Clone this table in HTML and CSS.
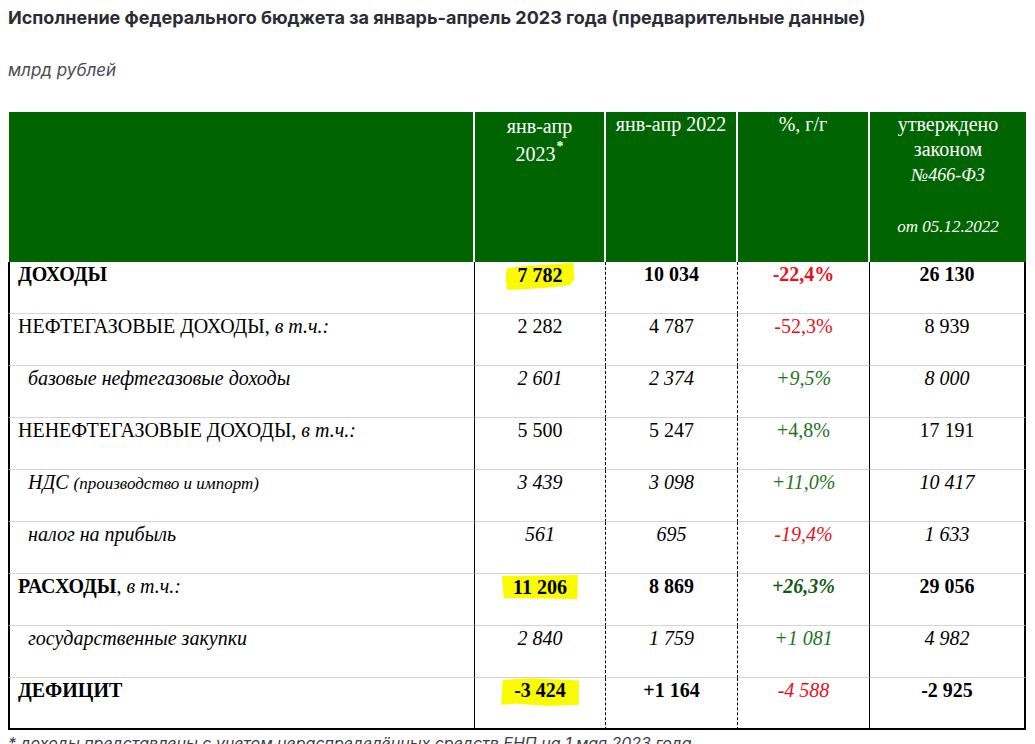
FILE: index.html
```html
<!DOCTYPE html>
<html lang="ru">
<head>
<meta charset="utf-8">
<title>Исполнение федерального бюджета</title>
<link rel="stylesheet" href="styles.css">
</head>
<body>
<h1 class="title">Исполнение федерального бюджета за январь-апрель 2023 года (предварительные данные)</h1>
<p class="units">млрд рублей</p>
<table class="budget">
  <colgroup>
    <col class="c-label"><col class="c-num"><col class="c-num2"><col class="c-num2"><col class="c-law">
  </colgroup>
  <thead>
    <tr>
      <th></th>
      <th class="h-2023">янв-апр<br>2023<sup>*</sup></th>
      <th>янв-апр 2022</th>
      <th>%, г/г</th>
      <th class="h-law">утверждено<br>законом<br><i class="sm">№466-ФЗ</i><br><br><i class="sm2">от 05.12.2022</i></th>
    </tr>
  </thead>
  <tbody>
    <tr class="bold">
      <td class="lbl">ДОХОДЫ</td>
      <td><span class="hl hl-a">7 782</span></td>
      <td>10 034</td>
      <td class="red">-22,4%</td>
      <td>26 130</td>
    </tr>
    <tr>
      <td class="lbl">НЕФТЕГАЗОВЫЕ ДОХОДЫ, <i>в т.ч.:</i></td>
      <td>2 282</td>
      <td>4 787</td>
      <td class="red">-52,3%</td>
      <td>8 939</td>
    </tr>
    <tr class="it">
      <td class="lbl sub">базовые нефтегазовые доходы</td>
      <td>2 601</td>
      <td>2 374</td>
      <td class="green">+9,5%</td>
      <td>8 000</td>
    </tr>
    <tr>
      <td class="lbl">НЕНЕФТЕГАЗОВЫЕ ДОХОДЫ, <i>в т.ч.:</i></td>
      <td>5 500</td>
      <td>5 247</td>
      <td class="green">+4,8%</td>
      <td>17 191</td>
    </tr>
    <tr class="it">
      <td class="lbl sub">НДС <span class="note">(производство и импорт)</span></td>
      <td>3 439</td>
      <td>3 098</td>
      <td class="green">+11,0%</td>
      <td>10 417</td>
    </tr>
    <tr class="it">
      <td class="lbl sub">налог на прибыль</td>
      <td>561</td>
      <td>695</td>
      <td class="red">-19,4%</td>
      <td>1 633</td>
    </tr>
    <tr class="bold">
      <td class="lbl">РАСХОДЫ<span class="normal">, <i>в т.ч.:</i></span></td>
      <td><span class="hl hl-b">11 206</span></td>
      <td>8 869</td>
      <td class="green dark"><i>+26,3%</i></td>
      <td>29 056</td>
    </tr>
    <tr class="it">
      <td class="lbl sub">государственные закупки</td>
      <td>2 840</td>
      <td>1 759</td>
      <td class="green">+1 081</td>
      <td>4 982</td>
    </tr>
    <tr class="bold last">
      <td class="lbl">ДЕФИЦИТ</td>
      <td><span class="hl hl-c">-3 424</span></td>
      <td>+1 164</td>
      <td class="red normal"><i>-4 588</i></td>
      <td>-2 925</td>
    </tr>
  </tbody>
</table>
<p class="footnote">* доходы представлены с учетом нераспределённых средств ЕНП на 1 мая 2023 года</p>
</body>
</html>
```

FILE: styles.css
```css
html, body {
  background: #ffffff;
}
body {
  margin: 8px;
  font-family: "Liberation Serif", "Times New Roman", serif;
  color: #000;
}
.title {
  margin: 0;
  font-family: Inter, "Noto Sans", sans-serif;
  font-weight: 700;
  font-size: 18px;
  line-height: 20px;
  color: #2b2c34;
}
.units {
  margin: 32px 0 0;
  font-family: Inter, "Noto Sans", sans-serif;
  font-style: italic;
  font-size: 17px;
  line-height: 20px;
  color: #4a4a52;
}
.budget {
  margin-top: 32px;
  width: 1018px;
  table-layout: fixed;
  border-collapse: separate;
  border-spacing: 0;
  font-size: 20px;
}
.c-label { width: 467px; }
.c-num { width: 131px; }
.c-num2 { width: 132px; }
.c-law { width: 156px; }

.budget th {
  background: #006400;
  color: #ffffff;
  font-weight: 400;
  height: 150px;
  padding: 0 2px;
  vertical-align: top;
  line-height: 25px;
  border-right: 2px solid #ffffff;
  text-align: center;
}
.budget th:first-child {
  border-left: 1px solid #ffffff;
}
.budget th:last-child {
  border-right: none;
}
.budget th.h-2023 {
  line-height: 28px;
  padding-top: 0;
}
.budget th sup {
  font-size: 14px;
  font-weight: 700;
  line-height: 0;
  vertical-align: 10px;
  margin-left: 1px;
}
.budget th .sm {
  font-size: 18px;
}
.budget th .sm2 {
  font-size: 17px;
}

.budget td {
  height: 52px;
  box-sizing: border-box;
  padding: 1px 2px 0;
  vertical-align: top;
  line-height: 22px;
  text-align: center;
  border-bottom: 1px solid #d4d4d4;
  border-right: 1px dashed #000;
}
.budget td:first-child {
  border-left: 2px solid #000;
  border-right: 1px solid #000;
  text-align: left;
}
.budget td:nth-child(4) {
  border-right: 1px solid #000;
}
.budget td:last-child {
  border-right: 2px solid #000;
}
.budget tr.last td {
  border-bottom: 2px solid #000;
}

.budget td.lbl {
  padding-left: 8px;
}
.budget td.lbl.sub {
  padding-left: 18px;
}
.bold td {
  font-weight: 700;
}
.bold .normal {
  font-weight: 400;
}
.it td {
  font-style: italic;
}
.note {
  font-size: 17px;
}
.red {
  color: #e8101c;
}
.green {
  color: #237323;
}
.green.dark {
  color: #145a14;
}

.hl {
  display: inline-block;
  background: #fbfb00;
  line-height: 22px;
}
.hl-a {
  padding: 2px 12px 4px;
  margin-top: -1px;
  clip-path: polygon(2% 22%, 30% 14%, 70% 8%, 98% 2%, 100% 60%, 94% 82%, 60% 92%, 20% 98%, 3% 100%, 0% 60%);
}
.hl-b {
  padding: 1px 11px 1px;
  margin-top: 0;
  clip-path: polygon(0% 4%, 100% 0%, 99% 100%, 2% 96%);
}
.hl-c {
  padding: 2px 13px 5px;
  margin-top: -2px;
  clip-path: polygon(2% 10%, 40% 4%, 100% 12%, 100% 96%, 60% 100%, 20% 92%, 0% 96%);
}

.footnote {
  margin: 3px 0 0;
  font-family: Inter, "Noto Sans", sans-serif;
  font-style: italic;
  font-size: 16px;
  line-height: 20px;
  color: #3c3c44;
}
```
